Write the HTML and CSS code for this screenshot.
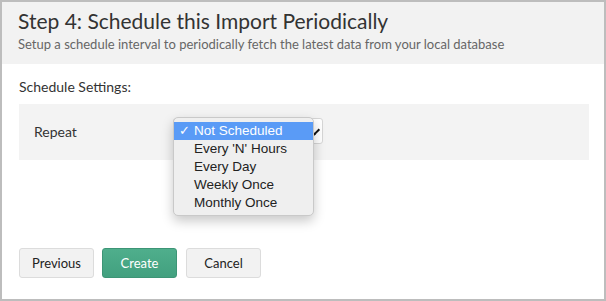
FILE: index.html
```html
<!DOCTYPE html>
<html lang="en">
<head>
  <meta charset="UTF-8" />
  <title>Schedule Import</title>
  <link rel="stylesheet" href="styles.css">
</head>
<body>
  <div class="wizard">
    <div class="wizard-head">
      <h1>Step 4: Schedule this Import Periodically</h1>
      <p>Setup a schedule interval to periodically fetch the latest data from your local database</p>
    </div>

    <div class="wizard-body">
      <div class="section-label">Schedule Settings:</div>
      <div class="setting-row">
        <label class="setting-name">Repeat</label>
        <div class="select-wrap">
          <div class="select-box"><span class="select-arrow"></span></div>
          <ul class="select-menu">
            <li class="selected"><span class="tick">&#10003;</span>Not Scheduled</li>
            <li>Every 'N' Hours</li>
            <li>Every Day</li>
            <li>Weekly Once</li>
            <li>Monthly Once</li>
          </ul>
        </div>
      </div>
    </div>

    <div class="actions">
      <button class="btn">Previous</button>
      <button class="btn btn-primary">Create</button>
      <button class="btn btn-cancel">Cancel</button>
    </div>
  </div>
</body>
</html>
```

FILE: styles.css
```css
body {
  margin: 0;
  font-family: "Lato", "Liberation Sans", sans-serif;
  color: #333;
}

.wizard {
  width: 606px;
  height: 301px;
  box-sizing: border-box;
  border: 2px solid #bdbdbd;
  background: #fff;
}

.wizard-head {
  height: 62px;
  box-sizing: border-box;
  background-color: #f2f2f2;
  padding: 7px 16px 0;
}

.wizard-head h1 {
  margin: 0;
  font-size: 21px;
  font-weight: 400;
  line-height: 24px;
  color: #333;
}

.wizard-head p {
  margin: 3px 0 0;
  font-size: 13px;
  line-height: 16px;
  color: #666;
}

.wizard-body {
  padding: 14px 15px 0 17px;
}

.section-label {
  font-size: 14px;
  line-height: 18px;
  color: #333;
  margin-bottom: 8px;
}

.setting-row {
  display: flex;
  align-items: center;
  height: 56px;
  background-color: #f3f3f3;
}

.setting-name {
  width: 154px;
  padding-left: 15px;
  box-sizing: border-box;
  font-size: 14px;
  color: #333;
  margin-top: -2px;
}

.select-wrap {
  position: relative;
  margin-top: -2px;
}

.select-box {
  width: 150px;
  height: 26px;
  box-sizing: border-box;
  background: #fff;
  border: 1px solid #d6d6d6;
  border-radius: 3px;
}

.select-arrow {
  position: absolute;
  right: 5px;
  top: 9px;
  width: 3px;
  height: 6px;
  border-right: 2px solid #111;
  border-bottom: 2px solid #111;
  transform: rotate(45deg);
}

.select-menu {
  position: absolute;
  left: 0;
  top: -1px;
  width: 141px;
  box-sizing: border-box;
  margin: 0;
  padding: 4px 0 3px;
  list-style: none;
  background-color: #efefef;
  border: 1px solid #c9c9c9;
  border-radius: 5px;
  box-shadow: 0 5px 12px rgba(0, 0, 0, 0.22);
  font-family: "Liberation Sans", "DejaVu Sans", sans-serif;
  font-size: 13.5px;
}

.select-menu li {
  position: relative;
  height: 18px;
  line-height: 18px;
  padding-left: 20px;
  color: #222;
}

.select-menu li.selected {
  background-color: #5a9bf6;
  color: #fff;
}

.tick {
  position: absolute;
  left: 5px;
  top: 0;
  font-family: "DejaVu Sans", sans-serif;
  font-size: 13px;
  font-weight: bold;
}

.actions {
  display: flex;
  gap: 8px;
  padding: 88px 0 0 17px;
}

.btn {
  width: 75px;
  height: 30px;
  box-sizing: border-box;
  font-family: "Lato", "Liberation Sans", sans-serif;
  font-size: 13px;
  color: #222;
  background-color: #f2f2f2;
  border: 1px solid #dcdcdc;
  border-radius: 3px;
  padding: 0;
  cursor: pointer;
}

.btn-primary {
  color: #fff;
  background: linear-gradient(#4fae8c, #42a07f);
  border-color: #3d9576;
}

.btn-cancel {
  margin-left: 1px;
}
```
